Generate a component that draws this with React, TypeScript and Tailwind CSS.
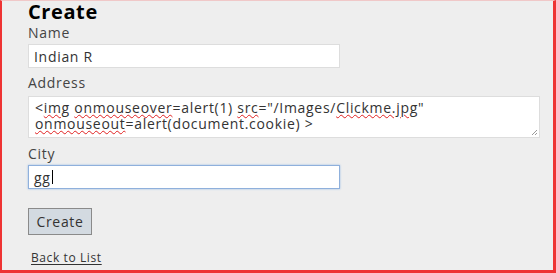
import React from "react";

const W = ({ children }: { children: React.ReactNode }) => (
  <span className="underline decoration-wavy decoration-[#e02020] decoration-1 underline-offset-[1px]">{children}</span>
);

export default function App() {
  return (
    <div className="w-[556px] h-[273px] bg-[#eeeeee] border-l-2 border-r-[3px] border-b-[3px] border-t border-l-[#e33] border-r-[#e33] border-b-[#e33] border-t-[#f0c8c8] overflow-hidden" style={{ fontFamily: '"Open Sans", "Noto Sans", sans-serif' }}>
      <div className="pl-[26px] flex flex-col text-[14px] tracking-[0.7px]">
        <h2 className="text-[20px] font-bold leading-[20px] mt-[1px] mb-[1px] text-black tracking-[0.6px]">Create</h2>
        <label className="leading-[18px] text-[#444] mt-[1px]">Name</label>
        <div className="mt-[2px] w-[312px] h-[24px] bg-white border border-[#dddddd] px-[5px] flex items-center text-[#333]">Indian R</div>
        <label className="leading-[18px] text-[#444] mt-[6px]">Address</label>
        <div className="relative mt-[4px] w-[512px] h-[42px] bg-white border border-[#dddddd] px-[6px] pt-[3px] leading-[16px] text-[#333]">
          <div>&lt;<W>img</W> <W>onmouseover</W>=alert(1) <W>src</W>="/Images/<W>Clickme.jpg</W>"</div>
          <div><W>onmouseout</W>=alert(document.cookie) &gt;</div>
          <svg className="absolute right-[1px] bottom-[1px]" width="8" height="8" viewBox="0 0 8 8">
            <path d="M7 2 L2 7 M7 5 L5 7" stroke="#999" strokeWidth="1" />
          </svg>
        </div>
        <label className="leading-[18px] text-[#444] mt-[7px]">City</label>
        <div className="mt-[2px] w-[312px] h-[24px] bg-white border border-[#8fb0dc] shadow-[0_0_2px_#9bbde6] px-[5px] flex items-center text-[#333]">gg<span className="inline-block w-[1px] h-[14px] bg-black ml-[1px]" /></div>
        <div className="mt-[19px]">
          <button className="w-[64px] h-[27px] bg-[#d3dae1] border border-[#8a8a8a] text-[#333] tracking-[0.7px]">Create</button>
        </div>
        <a className="mt-[14px] ml-[3px] text-[12px] tracking-[0.6px] text-[#333] underline underline-offset-2 w-fit" href="#">Back to List</a>
      </div>
    </div>
  );
}
